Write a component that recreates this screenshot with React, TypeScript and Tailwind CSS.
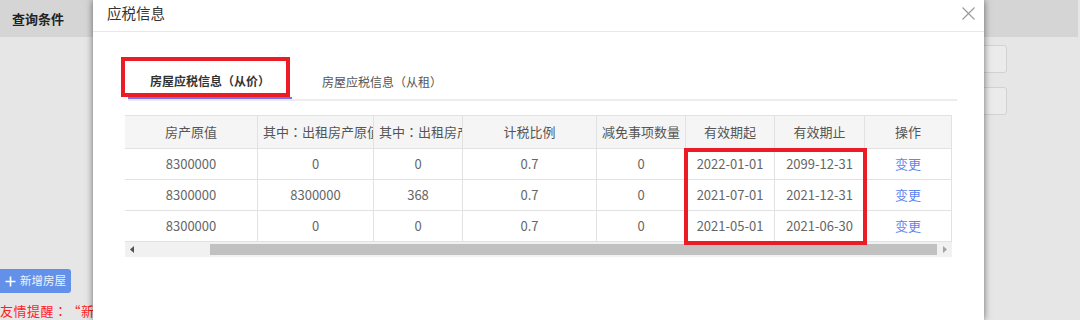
import React from "react";

const cols = [132, 116, 89, 134, 89, 89, 90, 88];
const rows = [
  ["8300000", "0", "0", "0.7", "0", "2022-01-01", "2099-12-31"],
  ["8300000", "8300000", "368", "0.7", "0", "2021-07-01", "2021-12-31"],
  ["8300000", "0", "0", "0.7", "0", "2021-05-01", "2021-06-30"],
];

const font = { fontFamily: '"Noto Sans CJK SC", "Noto Sans", sans-serif' };

function P({ children }: { children: React.ReactNode }) {
  return <span className="font-['Noto_Sans_CJK_TC',sans-serif]">{children}</span>;
}

const headers: React.ReactNode[] = [
  "房产原值",
  <>其中<P>：</P>出租房产原值</>,
  <>其中<P>：</P>出租房产</>,
  "计税比例",
  "减免事项数量",
  "有效期起",
  "有效期止",
  "操作",
];

export default function App() {
  return (
    <div className="relative w-[1080px] h-[320px] overflow-hidden bg-[#e6e6e6] [text-spacing-trim:space-all]" style={font}>
      {/* background page */}
      <div className="flex flex-col">
        <div className="w-[1078px] h-[37px] bg-[#d5d5d5] flex items-center pl-[12px]">
          <span className="text-[13px] font-bold text-[#222]">查询条件</span>
        </div>
        <div className="ml-[900px] mt-[8px] w-[107px] h-[28px] border border-[#d2d2d2] rounded-[3px] bg-[#ebebeb]" />
        <div className="ml-[900px] mt-[14px] w-[107px] h-[28px] border border-[#d2d2d2] rounded-[3px] bg-[#ebebeb]" />
        <div className="mt-[154px] w-[71px] h-[24px] bg-[#6390e8] rounded-r-[3px] flex items-center pl-[5px] gap-[4px] text-white">
          <svg width="11" height="11" viewBox="0 0 11 11"><path d="M5.5 0.5V10.5M0.5 5.5H10.5" stroke="#fff" strokeWidth="1.6" /></svg>
          <span className="text-[11.5px] text-[#eef3ff]">新增房屋</span>
        </div>
        <div className="mt-[9px] text-[13px] tracking-[0.5px] text-[#ff1f1f] whitespace-nowrap leading-[18px]">友情提醒<P>：</P>“新增房屋”</div>
      </div>

      {/* modal */}
      <div className="absolute left-[93px] top-0 w-[891px] h-[320px] bg-white shadow-[0_0_7px_rgba(0,0,0,0.55)]">
        <div className="h-[32px] border-b border-[#e8e8e8] flex items-center justify-between pl-[14px] pr-[9px]">
          <span className="text-[14.5px] text-[#333] leading-none -mt-[4px]">应税信息</span>
          <svg width="13" height="13" viewBox="0 0 13 13" className="-mt-[4px]"><path d="M0.5 0.5L12.5 12.5M12.5 0.5L0.5 12.5" stroke="#999" strokeWidth="1.1" /></svg>
        </div>

        {/* tabs */}
        <div className="relative mt-[32px] ml-[35px] w-[829px] flex border-b-2 border-[#ececec]">
          <div className="w-[164px] h-[35px] -mb-[2px] border-b-2 border-[#7770f4] flex items-center justify-center text-[12px] font-bold text-[#333]">
            <span>房屋应税信息<P>（</P>从价<P>）</P></span>
          </div>
          <div className="ml-[8px] w-[164px] h-[35px] flex items-center justify-center text-[12px] text-[#555]">
            <span>房屋应税信息<P>（</P>从租<P>）</P></span>
          </div>
          <div className="absolute left-[-7px] top-[-7px] w-[169px] h-[40px] border-4 border-[#ec1c24]" />
        </div>

        {/* table */}
        <div className="relative mt-[14px] ml-[32px] w-[827px]">
          <div className="flex bg-[#f5f5f5] border-t border-b border-[#e2e2e2] h-[34px]">
            {headers.map((h, i) => (
              <div
                key={i}
                style={{ width: cols[i] }}
                className={`shrink-0 px-[5px] overflow-hidden whitespace-nowrap text-center text-[13px] text-[#555] leading-[32px] ${i > 0 ? "border-l border-[#e2e2e2]" : ""} ${i === 7 ? "border-r" : ""}`}
              >
                {h}
              </div>
            ))}
          </div>
          {rows.map((r, ri) => (
            <div key={ri} className="flex border-b border-[#e2e2e2] h-[31px]">
              {[...r, "变更"].map((c, i) => (
                <div
                  key={i}
                  style={{ width: cols[i] }}
                  className={`shrink-0 overflow-hidden whitespace-nowrap text-center text-[13px] leading-[30px] ${i === 7 ? "text-[#5f86f0] border-r" : "text-[#666]"} ${i > 0 ? "border-l border-[#e2e2e2]" : ""}`}
                >
                  {c}
                </div>
              ))}
            </div>
          ))}
          {/* scrollbar */}
          <div className="h-[15px] bg-[#f1f1f1] flex items-center">
            <div className="w-[14px] flex justify-center">
              <svg width="4" height="7" viewBox="0 0 4 7"><path d="M4 0L0 3.5L4 7Z" fill="#505050" /></svg>
            </div>
            <div className="ml-[71px] w-[727px] h-[11px] bg-[#c1c1c1]" />
            <div className="w-[15px] flex justify-center">
              <svg width="4" height="7" viewBox="0 0 4 7"><path d="M0 0L4 3.5L0 7Z" fill="#a3a3a3" /></svg>
            </div>
          </div>
          {/* red annotation box */}
          <div className="absolute left-[559px] top-[33px] w-[183px] h-[97px] border-4 border-[#ec1c24]" />
        </div>
      </div>
    </div>
  );
}
